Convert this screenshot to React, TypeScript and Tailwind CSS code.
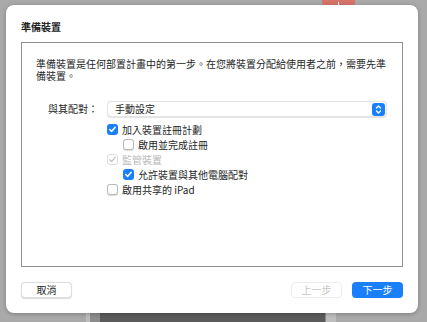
import React from 'react';

const font = { fontFamily: '"Noto Sans CJK TC", "Noto Sans", sans-serif' };

function Check({ checked, disabled }: { checked?: boolean; disabled?: boolean }) {
  if (checked && !disabled) {
    return (
      <span className="flex h-[11px] w-[11px] shrink-0 items-center justify-center rounded-[3px] bg-[#1a7ffb]">
        <svg width="9" height="9" viewBox="0 0 9 9">
          <path d="M1.8 4.6l1.8 1.9 3.6-4.2" fill="none" stroke="white" strokeWidth="1.5" strokeLinecap="round" strokeLinejoin="round" />
        </svg>
      </span>
    );
  }
  if (checked && disabled) {
    return (
      <span className="flex h-[11px] w-[11px] shrink-0 items-center justify-center rounded-[3px] border border-[#dcdcdc] bg-white">
        <svg width="9" height="9" viewBox="0 0 9 9">
          <path d="M1.8 4.6l1.8 1.9 3.6-4.2" fill="none" stroke="#c4c4c4" strokeWidth="1.3" strokeLinecap="round" strokeLinejoin="round" />
        </svg>
      </span>
    );
  }
  return <span className="h-[11px] w-[11px] shrink-0 rounded-[3px] border border-[#b9b9b9] bg-white shadow-[0_0.5px_1px_rgba(0,0,0,0.15)]" />;
}

function Row({ label, indent, checked, disabled }: { label: string; indent?: boolean; checked?: boolean; disabled?: boolean }) {
  return (
    <div className={`flex h-[15px] items-center gap-[4px] ${indent ? 'ml-[16px]' : ''}`}>
      <Check checked={checked} disabled={disabled} />
      <span className={`text-[10px] leading-none ${disabled ? 'text-[#b8b8b8]' : 'text-[#262626]'}`}>{label}</span>
    </div>
  );
}

export default function App() {
  return (
    <div className="relative h-[322px] w-[427px] overflow-hidden bg-[#a9a9a9]" style={font}>
      {/* stuff behind the sheet */}
      <div className="absolute left-[322px] top-0 flex h-[6px] w-[33px] items-end justify-center rounded-b-[4px] bg-[#d6736b]">
        <span className="mb-[1px] h-[3px] w-[1px] bg-white" />
      </div>
      <div className="absolute bottom-0 left-[86px] h-[12px] w-[250px] bg-[#bdbdbd]" />
      <div className="absolute bottom-0 left-[90px] h-[12px] w-[236px] bg-[#8c8c8c]" />
      <div className="absolute bottom-0 left-[100px] h-[12px] w-[225px] bg-[#5b5b5b]" />

      <div className="relative ml-[6px] mt-[5px] flex h-[308px] w-[412px] flex-col rounded-[8px] bg-white px-[15px] pt-[15px] pb-[15px] shadow-[0_1px_4px_rgba(0,0,0,0.25)]">
        <div className="h-[14px] text-[10px] font-bold leading-[14px] text-[#222]">準備裝置</div>
        <div className="mt-[8px] flex h-[225px] flex-col border border-[#8f8f8f] px-[14px] pt-[15px]">
          <p className="text-[10px] leading-[11.5px] text-[#262626]">
            準備裝置是任何部置計畫中的第一步。在您將裝置分配給使用者之前，需要先準備裝置。
          </p>
          <div className="mt-[20px] flex items-center">
            <div className="w-[63px] pr-[1px] text-right text-[10px] leading-none text-[#262626]">與其配對：</div>
            <div className="ml-[8px] mr-[1px] flex h-[16px] flex-1 items-center justify-between rounded-[4px] border border-[#e4e4e4] bg-white pl-[7px] pr-[1px] shadow-[0_0.5px_1px_rgba(0,0,0,0.12)]">
              <span className="text-[10px] leading-none text-[#262626]">手動設定</span>
              <span className="flex h-[13px] w-[13px] items-center justify-center rounded-[3px] bg-[#1a7ffb]">
                <svg width="9" height="11" viewBox="0 0 9 11">
                  <path d="M2.5 4l2-2 2 2M2.5 7l2 2 2-2" fill="none" stroke="white" strokeWidth="1.3" strokeLinecap="round" strokeLinejoin="round" />
                </svg>
              </span>
            </div>
          </div>
          <div className="ml-[71px] mt-[5px] flex flex-col">
            <Row label="加入裝置註冊計劃" checked />
            <Row label="啟用並完成註冊" indent />
            <Row label="監管裝置" checked disabled />
            <Row label="允許裝置與其他電腦配對" indent checked />
            <Row label="啟用共享的 iPad" />
          </div>
        </div>
        <div className="mt-[15px] flex items-center justify-between">
          <button className="flex h-[16px] w-[51px] items-center justify-center rounded-[4px] border border-[#dedede] bg-white text-[10px] leading-none text-[#262626] shadow-[0_0.5px_1px_rgba(0,0,0,0.15)]">取消</button>
          <div className="flex items-center gap-[10px]">
            <button className="flex h-[16px] w-[51px] items-center justify-center rounded-[4px] border border-[#ececec] bg-white text-[10px] leading-none text-[#c6c6c6]">上一步</button>
            <button className="flex h-[16px] w-[51px] items-center justify-center rounded-[4px] bg-[#1a7ffb] text-[10px] leading-none text-white">下一步</button>
          </div>
        </div>
      </div>
    </div>
  );
}
